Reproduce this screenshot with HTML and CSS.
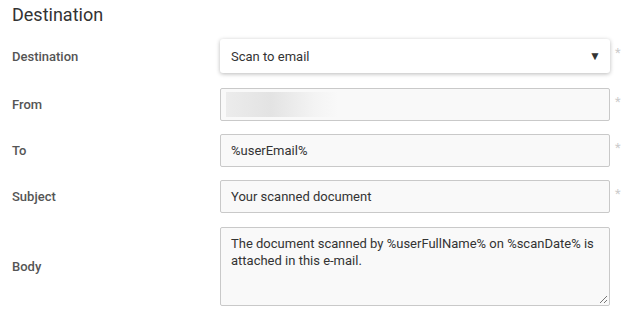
FILE: index.html
```html
<!DOCTYPE html>
<html>
<head>
<meta charset="utf-8">
<link rel="stylesheet" href="styles.css">
</head>
<body>
<div class="panel">
  <h2 class="title">Destination</h2>
  <div class="form">
    <div class="row row-select">
      <label class="label">Destination</label>
      <div class="select"><span>Scan to email</span><span class="caret">&#9660;</span></div>
      <span class="req">*</span>
    </div>
    <div class="row">
      <label class="label">From</label>
      <div class="input"><div class="blur"></div></div>
      <span class="req">*</span>
    </div>
    <div class="row">
      <label class="label">To</label>
      <div class="input">%userEmail%</div>
      <span class="req">*</span>
    </div>
    <div class="row">
      <label class="label">Subject</label>
      <div class="input">Your scanned document</div>
      <span class="req">*</span>
    </div>
    <div class="row row-body">
      <label class="label">Body</label>
      <div class="textarea">The document scanned by %userFullName% on %scanDate% is attached in this e-mail.<svg class="grip" width="10" height="10" viewBox="0 0 10 10"><path d="M9 2 L2 9 M9 6 L6 9" stroke="#777" stroke-width="1"/></svg></div>
      <span class="req"></span>
    </div>
  </div>
</div>
</body>
</html>
```

FILE: styles.css
```css
html, body {
  margin: 0;
  padding: 0;
  background: #fff;
}
body {
  font-family: Roboto, "Liberation Sans", Arial, sans-serif;
  color: #333;
}
.panel {
  padding: 3px 0 0 12px;
}
.title {
  margin: 0;
  font-size: 18px;
  font-weight: 400;
  line-height: 24px;
  color: #333;
}
.form {
  display: flex;
  flex-direction: column;
  gap: 13px;
  margin-top: 12px;
}
.row {
  display: grid;
  grid-template-columns: 208px 390px 17px;
  align-items: center;
  height: 33px;
}
.row-select {
  height: 34px;
  margin-bottom: 2px;
}
.row-body {
  height: 79px;
  margin-top: 1px;
}
.label {
  font-size: 13px;
  font-weight: 500;
  color: #555;
}
.select {
  height: 34px;
  box-sizing: border-box;
  background: #fff;
  border-radius: 3px;
  box-shadow: 0 1px 4px rgba(0,0,0,0.28);
  display: flex;
  align-items: center;
  justify-content: space-between;
  padding: 0 9px 0 11px;
  font-size: 13px;
  color: #333;
}
.caret {
  font-size: 12px;
  color: #333;
}
.input {
  height: 33px;
  box-sizing: border-box;
  background: #f9f9f9;
  border: 1px solid #c9c9c9;
  border-radius: 2px;
  display: flex;
  align-items: center;
  padding: 0 10px;
  font-size: 13px;
  color: #333;
}
.blur {
  margin-left: -5px;
  width: 112px;
  height: 25px;
  background: linear-gradient(90deg, #ececec 0%, #e3e3e3 40%, #f4f4f4 80%, #f9f9f9 100%);
}
.textarea {
  position: relative;
  height: 79px;
  box-sizing: border-box;
  background: #f9f9f9;
  border: 1px solid #c9c9c9;
  border-radius: 2px;
  padding: 7px 10px;
  font-size: 13px;
  line-height: 17px;
  color: #333;
}
.grip {
  position: absolute;
  right: 1px;
  bottom: 1px;
}
.req {
  font-size: 13px;
  color: #ccc;
  padding-left: 5px;
  align-self: start;
  margin-top: 6px;
}
```
